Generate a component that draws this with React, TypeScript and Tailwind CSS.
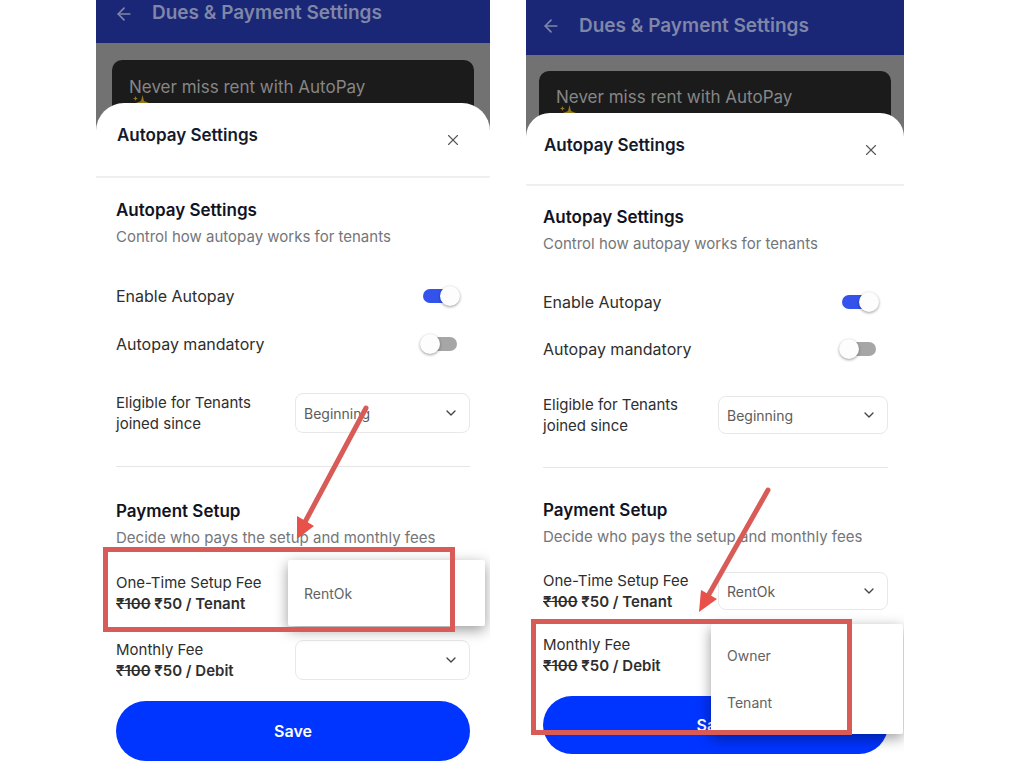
import React, { useState } from "react";
import { ArrowLeft, ChevronDown, X } from "lucide-react";

interface ScreenStyle {
  appBar: string;
  backdrop: string;
  promo: string;
  sheet: string;
  sheetHeader: string;
  body: string;
  toggles: string;
  toggleRow: string;
  eligible: string;
  divider: string;
  paymentTitle: string;
  fees: string;
  field: string;
  select: string;
  save: string;
}

interface ScreenProps {
  id: string;
  styles: ScreenStyle;
  setupPayer: string;
  setupOverlay?: React.ReactNode;
  monthlyOverlay?: React.ReactNode;
}

const firstScreen: ScreenStyle = {
  appBar: "h-[43px] pb-4 pl-[18px]",
  backdrop: "h-[90px] pt-[17px] px-4",
  promo: "pt-[15px] pl-[17px]",
  sheet: "rounded-t-[28px]",
  sheetHeader: "h-[75px] pl-[21px] pr-7",
  body: "px-5 pt-5",
  toggles: "mt-[25px]",
  toggleRow: "h-12 pr-[13px]",
  eligible: "mt-6",
  divider: "mt-8",
  paymentTitle: "mt-8",
  fees: "mt-6 gap-[25px]",
  field: "w-[175px]",
  select: "h-10",
  save: "h-[60px]",
};

const secondScreen: ScreenStyle = {
  appBar: "h-[55px] pb-[3px] pl-[15px]",
  backdrop: "h-[88px] pt-4 px-[13px]",
  promo: "pt-[14px] pl-[17px]",
  sheet: "rounded-t-[24px]",
  sheetHeader: "h-[73px] pl-[18px] pr-6",
  body: "pl-[17px] pr-4 pt-[19px]",
  toggles: "mt-6",
  toggleRow: "h-[47px] pr-3",
  eligible: "mt-[22px]",
  divider: "mt-[31px]",
  paymentTitle: "mt-[30px]",
  fees: "mt-[23px] gap-[22px]",
  field: "w-[170px]",
  select: "h-[38px]",
  save: "h-[58px]",
};

interface ToggleProps {
  id: string;
  label: string;
  rowClass: string;
  defaultOn: boolean;
}

function Toggle({ id, label, rowClass, defaultOn }: ToggleProps) {
  const [on, setOn] = useState(defaultOn);

  return (
    <label
      htmlFor={id}
      className={`flex items-center justify-between cursor-pointer text-[16px] ${rowClass}`}
    >
      {label}
      <input
        id={id}
        type="checkbox"
        role="switch"
        checked={on}
        onChange={() => setOn(!on)}
        className="peer sr-only"
      />
      <span className="relative h-[14px] w-[34px] rounded-full bg-[#a6a6a6] peer-checked:bg-[#3453ec]">
        <span
          className={`absolute -top-[3px] size-5 rounded-full bg-[#fdfdfd] shadow-[0_1px_3px_rgba(0,0,0,0.4)] ${
            on ? "left-[17px]" : "-left-[3px]"
          }`}
        />
      </span>
    </label>
  );
}

interface DropdownProps {
  id: string;
  value: string;
  options: string[];
  styles: ScreenStyle;
}

function Dropdown({ id, value, options, styles }: DropdownProps) {
  return (
    <div className="relative">
      <select
        id={id}
        defaultValue={value}
        className={`w-full appearance-none rounded-lg border border-[#e8e8e8] bg-white pl-2 pr-8 text-[14px] text-[#5c5c5c] ${styles.select}`}
      >
        {options.map((option) => (
          <option key={option} value={option}>
            {option}
          </option>
        ))}
      </select>
      <ChevronDown
        size={16}
        className="pointer-events-none absolute right-[11px] top-1/2 -translate-y-1/2 text-[#444]"
      />
    </div>
  );
}

interface FeeRowProps {
  id: string;
  name: string;
  unit: string;
  value: string;
  styles: ScreenStyle;
  overlay?: React.ReactNode;
}

function FeeRow({ id, name, unit, value, styles, overlay }: FeeRowProps) {
  return (
    <div className="relative flex items-center justify-between">
      <label htmlFor={id} className="text-[15px] leading-[21px]">
        <span className="block">{name}</span>
        <span className="block font-semibold">
          <s>₹100</s> ₹50 / {unit}
        </span>
      </label>
      <div className={styles.field}>
        <Dropdown
          id={id}
          value={value}
          options={["", "RentOk", "Owner", "Tenant"]}
          styles={styles}
        />
      </div>
      {overlay}
    </div>
  );
}

interface MenuProps {
  options: string[];
  className: string;
  itemClass: string;
}

function Menu({ options, className, itemClass }: MenuProps) {
  return (
    <div
      role="listbox"
      className={`absolute z-10 -right-[15px] rounded-xs bg-white shadow-[0_4px_14px_rgba(0,0,0,0.4)] ${className}`}
    >
      {options.map((option) => (
        <button
          key={option}
          role="option"
          className={`block w-full px-4 text-left text-[14px] text-[#636363] ${itemClass}`}
        >
          {option}
        </button>
      ))}
    </div>
  );
}

function Sparkle() {
  return (
    <svg
      className="-mt-1 ml-1"
      width="16"
      height="16"
      viewBox="0 0 16 16"
      fill="#94761a"
    >
      <path d="M9.500 0 L11 6 L16 8 L11 10 L9.500 16 L8 10 L3 8 L8 6 Z" />
      <path d="M2.500 1 L3.200 2.800 L5 3.500 L3.200 4.200 L2.500 6 L1.800 4.200 L0 3.500 L1.800 2.800 Z" />
    </svg>
  );
}

function Screen({
  id,
  styles,
  setupPayer,
  setupOverlay,
  monthlyOverlay,
}: ScreenProps) {
  return (
    <section className="min-w-0 overflow-hidden bg-white">
      <header
        className={`flex items-center gap-[18px] bg-[#1a2776] text-[19px] font-semibold text-[#8086a8] ${styles.appBar}`}
      >
        <button aria-label="Back">
          <ArrowLeft size={20} strokeWidth={2} />
        </button>
        <h1 className="whitespace-nowrap">Dues &amp; Payment Settings</h1>
      </header>

      <div className={`bg-[#727272] ${styles.backdrop}`}>
        <div
          className={`h-full rounded-t-[10px] bg-[#1b1b1b] text-[17px] text-[#868686] ${styles.promo}`}
        >
          <p className="leading-6">Never miss rent with AutoPay</p>
          <Sparkle />
        </div>
      </div>

      {/* sheet slides up over the dimmed page */}
      <div className={`relative -mt-[30px] bg-white ${styles.sheet}`}>
        <div
          className={`flex items-start justify-between border-b-2 border-[#efefef] pt-5 ${styles.sheetHeader}`}
        >
          <h2 className="text-[17px] leading-6 font-semibold text-[#141a2b]">
            Autopay Settings
          </h2>
          <button aria-label="Close" className="mt-2 text-[#555]">
            <X size={18} strokeWidth={1.5} />
          </button>
        </div>

        <div className={`text-[#2e2e2e] ${styles.body}`}>
          <h3 className="text-[17px] leading-6 font-semibold text-[#111322]">
            Autopay Settings
          </h3>
          <p className="mt-[5px] text-[15px] leading-5 text-[#747679]">
            Control how autopay works for tenants
          </p>

          <div className={styles.toggles}>
            <Toggle
              id={`${id}-enable`}
              label="Enable Autopay"
              rowClass={styles.toggleRow}
              defaultOn={true}
            />
            <Toggle
              id={`${id}-mandatory`}
              label="Autopay mandatory"
              rowClass={styles.toggleRow}
              defaultOn={false}
            />
          </div>

          <div
            className={`flex items-center justify-between ${styles.eligible}`}
          >
            <label
              htmlFor={`${id}-since`}
              className="text-[15px] leading-[21px]"
            >
              Eligible for Tenants
              <br />
              joined since
            </label>
            <div className={styles.field}>
              <Dropdown
                id={`${id}-since`}
                value="Beginning"
                options={["Beginning"]}
                styles={styles}
              />
            </div>
          </div>

          <hr className={`border-[#e6e6e6] ${styles.divider}`} />

          <h3
            className={`text-[17px] leading-6 font-semibold text-[#111322] ${styles.paymentTitle}`}
          >
            Payment Setup
          </h3>
          <p className="mt-[5px] text-[15px] leading-5 text-[#747679]">
            Decide who pays the setup and monthly fees
          </p>

          <div className={`flex flex-col ${styles.fees}`}>
            <FeeRow
              id={`${id}-setup`}
              name="One-Time Setup Fee"
              unit="Tenant"
              value={setupPayer}
              styles={styles}
              overlay={setupOverlay}
            />
            <FeeRow
              id={`${id}-monthly`}
              name="Monthly Fee"
              unit="Debit"
              value=""
              styles={styles}
              overlay={monthlyOverlay}
            />
          </div>

          <button
            className={`mt-5 w-full rounded-full bg-[#0034ff] text-[16px] font-semibold text-white ${styles.save}`}
          >
            Save
          </button>
        </div>
      </div>
    </section>
  );
}

function App() {
  return (
    <main className="grid min-h-screen grid-cols-[minmax(0,394fr)_minmax(0,378fr)] gap-9 bg-white pl-24 pr-[120px] font-['Inter',sans-serif]">
      <Screen
        id="setup"
        styles={firstScreen}
        setupPayer="RentOk"
        setupOverlay={
          <>
            <Menu
              options={["RentOk"]}
              className="-top-3 w-[197px] py-[9px]"
              itemClass="h-12"
            />
            <div className="pointer-events-none absolute z-20 -left-[13px] -top-[25px] h-[85px] w-[352px] border-5 border-[#d85b58]" />
            <svg
              className="pointer-events-none absolute z-20 left-[179px] -top-[169px]"
              width="80"
              height="140"
              viewBox="0 0 80 140"
            >
              <path
                d="M71 5 L10 119"
                stroke="#d85b58"
                strokeWidth="5"
                strokeLinecap="round"
              />
              <path d="M2 136 L2 113 L19 123 Z" fill="#e8504a" />
            </svg>
          </>
        }
      />
      <Screen
        id="monthly"
        styles={secondScreen}
        setupPayer="RentOk"
        monthlyOverlay={
          <>
            <Menu
              options={["Owner", "Tenant"]}
              className="-top-[10px] w-[192px] py-2"
              itemClass="h-[47px]"
            />
            <div className="pointer-events-none absolute z-20 -left-3 -top-[15px] h-[116px] w-[321px] border-5 border-[#d85b58]" />
            <svg
              className="pointer-events-none absolute z-20 left-[155px] -top-[149px]"
              width="80"
              height="130"
              viewBox="0 0 80 130"
            >
              <path
                d="M70 5 L10 111"
                stroke="#d85b58"
                strokeWidth="5"
                strokeLinecap="round"
              />
              <path d="M1 127 L3 105 L19 114 Z" fill="#e8504a" />
            </svg>
          </>
        }
      />
    </main>
  );
}

export default App;
